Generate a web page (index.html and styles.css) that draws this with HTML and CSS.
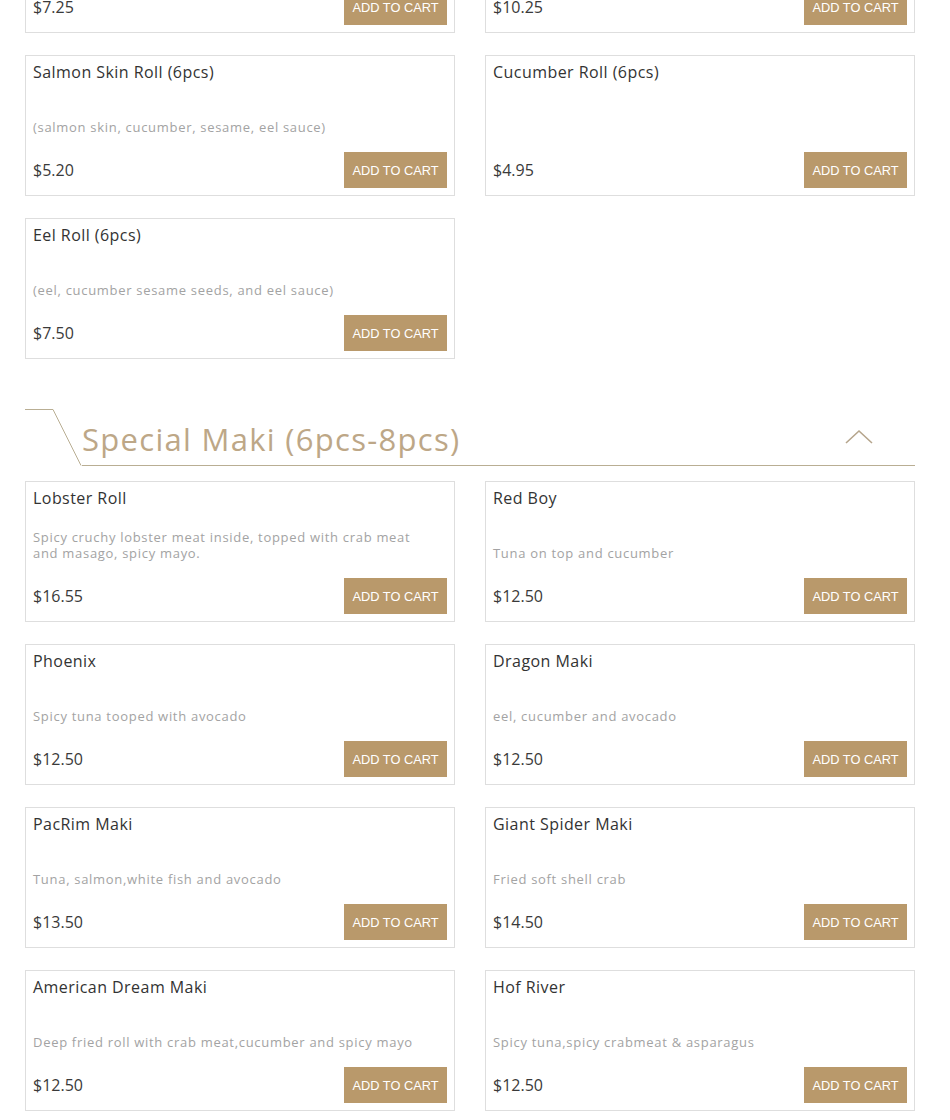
FILE: index.html
```html
<!DOCTYPE html>
<html lang="en">
<head>
<meta charset="utf-8">
<title>Menu</title>
<link rel="stylesheet" href="styles.css">
</head>
<body>
<main class="menu">
  <section class="grid grid-first">
    <div class="card">
      <h3 class="name">Spicy Tuna Roll (6pcs)</h3>
      <p class="desc">(tuna, spicy mayo, cucumber)</p>
      <div class="buy"><span class="price">$7.25</span><button class="cart">ADD TO CART</button></div>
    </div>
    <div class="card">
      <h3 class="name">Rainbow Roll (8pcs)</h3>
      <p class="desc">(crab, avocado, assorted fish on top)</p>
      <div class="buy"><span class="price">$10.25</span><button class="cart">ADD TO CART</button></div>
    </div>
    <div class="card">
      <h3 class="name">Salmon Skin Roll (6pcs)</h3>
      <p class="desc">(salmon skin, cucumber, sesame, eel sauce)</p>
      <div class="buy"><span class="price">$5.20</span><button class="cart">ADD TO CART</button></div>
    </div>
    <div class="card">
      <h3 class="name">Cucumber Roll (6pcs)</h3>
      <div class="buy"><span class="price">$4.95</span><button class="cart">ADD TO CART</button></div>
    </div>
    <div class="card">
      <h3 class="name">Eel Roll (6pcs)</h3>
      <p class="desc">(eel, cucumber sesame seeds, and eel sauce)</p>
      <div class="buy"><span class="price">$7.50</span><button class="cart">ADD TO CART</button></div>
    </div>
  </section>

  <header class="section-head">
    <svg class="head-deco" width="57" height="57" viewBox="0 0 57 57" aria-hidden="true">
      <path d="M0 0.5 H28 L56 56.5" fill="none" stroke="#b9ae93" stroke-width="1"/>
    </svg>
    <div class="head-main">
      <h2 class="head-title">Special Maki (6pcs-8pcs)</h2>
      <svg class="chev" width="30" height="18" viewBox="0 0 30 18" aria-hidden="true">
        <path d="M2 15 L15 3 L28 15" fill="none" stroke="#b5a58c" stroke-width="1.6"/>
      </svg>
    </div>
  </header>

  <section class="grid">
    <div class="card">
      <h3 class="name">Lobster Roll</h3>
      <p class="desc">Spicy cruchy lobster meat inside, topped with crab meat and masago, spicy mayo.</p>
      <div class="buy"><span class="price">$16.55</span><button class="cart">ADD TO CART</button></div>
    </div>
    <div class="card">
      <h3 class="name">Red Boy</h3>
      <p class="desc">Tuna on top and cucumber</p>
      <div class="buy"><span class="price">$12.50</span><button class="cart">ADD TO CART</button></div>
    </div>
    <div class="card">
      <h3 class="name">Phoenix</h3>
      <p class="desc">Spicy tuna tooped with avocado</p>
      <div class="buy"><span class="price">$12.50</span><button class="cart">ADD TO CART</button></div>
    </div>
    <div class="card">
      <h3 class="name">Dragon Maki</h3>
      <p class="desc">eel, cucumber and avocado</p>
      <div class="buy"><span class="price">$12.50</span><button class="cart">ADD TO CART</button></div>
    </div>
    <div class="card">
      <h3 class="name">PacRim Maki</h3>
      <p class="desc">Tuna, salmon,white fish and avocado</p>
      <div class="buy"><span class="price">$13.50</span><button class="cart">ADD TO CART</button></div>
    </div>
    <div class="card">
      <h3 class="name">Giant Spider Maki</h3>
      <p class="desc">Fried soft shell crab</p>
      <div class="buy"><span class="price">$14.50</span><button class="cart">ADD TO CART</button></div>
    </div>
    <div class="card">
      <h3 class="name">American Dream Maki</h3>
      <p class="desc">Deep fried roll with crab meat,cucumber and spicy mayo</p>
      <div class="buy"><span class="price">$12.50</span><button class="cart">ADD TO CART</button></div>
    </div>
    <div class="card">
      <h3 class="name">Hof River</h3>
      <p class="desc">Spicy tuna,spicy crabmeat &amp; asparagus</p>
      <div class="buy"><span class="price">$12.50</span><button class="cart">ADD TO CART</button></div>
    </div>
  </section>
</main>
</body>
</html>
```

FILE: styles.css
```css
* { box-sizing: border-box; }

html, body {
  margin: 0;
  padding: 0;
  background: #ffffff;
}

body {
  font-family: "Open Sans", "Noto Sans", "DejaVu Sans", sans-serif;
  color: #333333;
}

.menu {
  width: 890px;
  margin: -108px 0 0 25px;
}

.grid {
  display: grid;
  grid-template-columns: 430px 430px;
  column-gap: 30px;
  row-gap: 22px;
}

.card {
  height: 141px;
  border: 1px solid #dedede;
  padding: 7px;
  display: flex;
  flex-direction: column;
}

.name {
  margin: 0;
  font-size: 16px;
  font-weight: 400;
  line-height: 18px;
  letter-spacing: 0.45px;
  color: #333333;
}

.desc {
  margin: auto 0 17px;
  padding-right: 16px;
  font-size: 13px;
  line-height: 16px;
  letter-spacing: 0.7px;
  color: #a3a3a3;
}

.buy {
  margin-top: auto;
  height: 36px;
  display: flex;
  align-items: center;
  justify-content: space-between;
}

.desc + .buy { margin-top: 0; }

.price {
  font-size: 16px;
  color: #3a3a3a;
}

.cart {
  height: 36px;
  width: 103px;
  border: 0;
  padding: 0;
  background: #b9996b;
  color: #ffffff;
  font-family: "Liberation Sans", Arial, sans-serif;
  font-size: 12.8px;
  cursor: pointer;
}

.section-head {
  margin-top: 50px;
  margin-bottom: 15px;
  height: 57px;
  display: flex;
  align-items: stretch;
}

.head-deco {
  flex: none;
  display: block;
}

.head-main {
  flex: 1;
  border-bottom: 1px solid #b9ae93;
  display: flex;
  align-items: center;
  justify-content: space-between;
  padding: 0 41px 0 0;
}

.head-title {
  margin: 3px 0 0;
  font-size: 31px;
  font-weight: 400;
  color: #bda787;
  letter-spacing: 1.3px;
}

.chev {
  display: block;
}
```
